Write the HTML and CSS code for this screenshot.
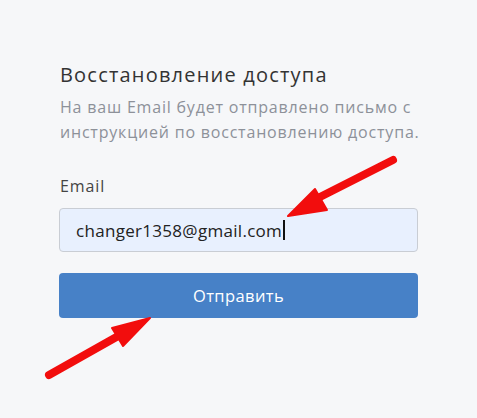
FILE: index.html
```html
<!DOCTYPE html>
<html lang="ru">
<head>
<meta charset="utf-8">
<link rel="stylesheet" href="styles.css">
</head>
<body>
<div class="page">
  <form class="card">
    <h1 class="title">Восстановление доступа</h1>
    <p class="desc">На ваш Email будет отправлено письмо с инструкцией по восстановлению доступа.</p>
    <label class="label">Email</label>
    <div class="input"><span class="value">changer1358@gmail.com</span><span class="caret"></span></div>
    <button type="button" class="btn">Отправить</button>
  </form>
  <svg class="arrows" width="477" height="418" viewBox="0 0 477 418">
    <g fill="#f20d0d" stroke="#f20d0d" stroke-linejoin="round">
      <line x1="393" y1="160" x2="318" y2="198" stroke-width="8" stroke-linecap="round"/>
      <polygon points="288,216 315,189 327,210" stroke-width="2"/>
      <line x1="49" y1="375" x2="120" y2="335" stroke-width="8" stroke-linecap="round"/>
      <polygon points="150,318 112,328 123,346" stroke-width="2"/>
    </g>
  </svg>
</div>
</body>
</html>
```
FILE: styles.css
```css
html, body { margin: 0; padding: 0; }
body {
  background: #f6f7f9;
  font-family: "Open Sans", "Noto Sans", sans-serif;
  width: 477px;
  height: 418px;
  overflow: hidden;
}
.page { position: relative; width: 477px; height: 418px; }
.card {
  display: flex;
  flex-direction: column;
  padding: 61px 59px 0 59px;
}
.title {
  margin: 0 0 0 1px;
  font-size: 20px;
  font-weight: 400;
  color: #333;
  line-height: 28px;
  letter-spacing: 1.2px;
}
.desc {
  margin: 6px -20px 0 1px;
  font-size: 16px;
  line-height: 25px;
  color: #8d9199;
  letter-spacing: 0.8px;
}
.label {
  margin: 31px 0 0 1px;
  font-size: 16px;
  line-height: 20px;
  color: #444;
  letter-spacing: 0.9px;
}
.input {
  margin-top: 12px;
  height: 42px;
  border: 1px solid #c9cdd4;
  border-radius: 4px;
  background: #e8f0fe;
  display: flex;
  align-items: center;
  padding-left: 16px;
}
.value { font-size: 17px; color: #222; letter-spacing: 0.3px; }
.caret { width: 2px; height: 20px; background: #111; margin-left: 1px; }
.btn {
  margin-top: 21px;
  height: 45px;
  border: none;
  border-radius: 4px;
  background: #4781c7;
  color: #fff;
  font-family: inherit;
  font-size: 16.5px;
  letter-spacing: 0.4px;
}
.arrows { position: absolute; left: 0; top: 0; pointer-events: none; }
```
